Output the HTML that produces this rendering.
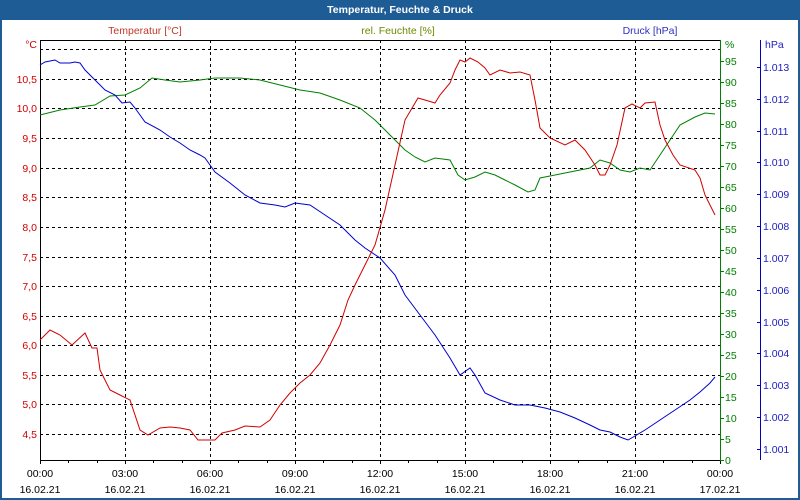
<!DOCTYPE html>
<html><head><meta charset="utf-8"><style>
html,body{margin:0;padding:0;width:800px;height:500px;overflow:hidden;background:#fff}
svg{display:block}
text{font-family:"Liberation Sans","DejaVu Sans",sans-serif;font-size:10.5px}
</style></head><body>
<svg width="800" height="500" viewBox="0 0 800 500">
<rect x="0" y="0" width="800" height="500" fill="#1e5c96"/>
<rect x="2" y="20" width="796" height="478" fill="#fff"/>
<text x="400" y="13" text-anchor="middle" fill="#fff" font-weight="bold" style="font-size:10.5px">Temperatur, Feuchte &amp; Druck</text>
<text x="145" y="34" text-anchor="middle" fill="#c0392b">Temperatur [°C]</text>
<text x="398" y="34" text-anchor="middle" fill="#6a8a00">rel. Feuchte [%]</text>
<text x="650" y="34" text-anchor="middle" fill="#3030c0">Druck [hPa]</text>
<g stroke="#000" stroke-dasharray="3,3" stroke-width="1">
<path d="M40 49.5H720M40 79.5H720M40 108.5H720M40 138.5H720M40 168.5H720M40 197.5H720M40 227.5H720M40 257.5H720M40 286.5H720M40 316.5H720M40 345.5H720M40 375.5H720M40 404.5H720M40 434.5H720"/>
<path d="M125.5 40V460M210.5 40V460M295.5 40V460M380.5 40V460M465.5 40V460M550.5 40V460M635.5 40V460"/>
</g>
<path d="M40.5 40V460.5H720" stroke="#000" fill="none"/>
<path d="M40 40.5H720" stroke="#000"/>
<path d="M40.5 460v4M68.5 460v3M97.5 460v3M125.5 460v4M153.5 460v3M182.5 460v3M210.5 460v4M238.5 460v3M267.5 460v3M295.5 460v4M323.5 460v3M352.5 460v3M380.5 460v4M408.5 460v3M437.5 460v3M465.5 460v4M493.5 460v3M522.5 460v3M550.5 460v4M578.5 460v3M607.5 460v3M635.5 460v4M663.5 460v3M692.5 460v3M720.5 460v4" stroke="#000"/>
<path d="M720.5 40V460" stroke="#008000"/>
<path d="M720 61.5h4M720 82.5h4M720 103.5h4M720 124.5h4M720 145.5h4M720 166.5h4M720 187.5h4M720 208.5h4M720 229.5h4M720 250.5h4M720 271.5h4M720 292.5h4M720 313.5h4M720 334.5h4M720 355.5h4M720 376.5h4M720 397.5h4M720 418.5h4M720 439.5h4M720 460.5h4" stroke="#008000"/>
<path d="M760.5 40V460" stroke="#0000c0"/>
<path d="M757 67.5h3M757 99.5h3M757 131.5h3M757 162.5h3M757 194.5h3M757 226.5h3M757 258.5h3M757 290.5h3M757 322.5h3M757 353.5h3M757 385.5h3M757 417.5h3M757 449.5h3" stroke="#0000c0"/>
<g fill="#d00000" text-anchor="end">
<text x="37" y="48">°C</text>
<text x="37" y="83">10,5</text><text x="37" y="112">10,0</text><text x="37" y="142">9,5</text><text x="37" y="172">9,0</text><text x="37" y="201">8,5</text><text x="37" y="231">8,0</text><text x="37" y="261">7,5</text><text x="37" y="290">7,0</text><text x="37" y="320">6,5</text><text x="37" y="349">6,0</text><text x="37" y="379">5,5</text><text x="37" y="408">5,0</text><text x="37" y="438">4,5</text>
</g>
<g fill="#008000">
<text x="725" y="48">%</text>
<text x="725" y="65">95</text><text x="725" y="86">90</text><text x="725" y="107">85</text><text x="725" y="128">80</text><text x="725" y="149">75</text><text x="725" y="170">70</text><text x="725" y="191">65</text><text x="725" y="212">60</text><text x="725" y="233">55</text><text x="725" y="254">50</text><text x="725" y="275">45</text><text x="725" y="296">40</text><text x="725" y="317">35</text><text x="725" y="338">30</text><text x="725" y="359">25</text><text x="725" y="380">20</text><text x="725" y="401">15</text><text x="725" y="422">10</text><text x="725" y="443">5</text><text x="725" y="464">0</text>
</g>
<g fill="#2020c0">
<text x="765" y="48">hPa</text>
<text x="763" y="71">1.013</text><text x="763" y="103">1.012</text><text x="763" y="135">1.011</text><text x="763" y="166">1.010</text><text x="763" y="198">1.009</text><text x="763" y="230">1.008</text><text x="763" y="262">1.007</text><text x="763" y="294">1.006</text><text x="763" y="326">1.005</text><text x="763" y="357">1.004</text><text x="763" y="389">1.003</text><text x="763" y="421">1.002</text><text x="763" y="453">1.001</text>
</g>
<g fill="#000" text-anchor="middle">
<text x="40" y="477">00:00</text><text x="125" y="477">03:00</text><text x="210" y="477">06:00</text><text x="295" y="477">09:00</text><text x="380" y="477">12:00</text><text x="465" y="477">15:00</text><text x="550" y="477">18:00</text><text x="635" y="477">21:00</text><text x="720" y="477">00:00</text>
<text x="40" y="493">16.02.21</text><text x="125" y="493">16.02.21</text><text x="210" y="493">16.02.21</text><text x="295" y="493">16.02.21</text><text x="380" y="493">16.02.21</text><text x="465" y="493">16.02.21</text><text x="550" y="493">16.02.21</text><text x="635" y="493">16.02.21</text><text x="720" y="493">17.02.21</text>
</g>
<polyline fill="none" stroke="#008000" points="40,115 60,110 80,107 95,105 110,96 125,95 140,88 152,78 165,80 180,82 200,80 215,78 240,78 260,80 280,85 300,90 320,93 340,100 360,108 375,120 385,130 395,140 405,150 415,157 425,162 435,158 450,160 458,175 465,180 475,177 485,172 495,175 505,180 515,185 528,192 535,190 540,178 555,175 570,172 590,168 600,160 610,163 620,170 630,172 640,168 650,170 660,155 670,140 680,125 695,117 705,113 715,114"/>
<polyline fill="none" stroke="#0000d0" points="40,65 45,62 55,60 60,63 70,63 75,62 80,63 85,70 95,80 105,90 115,95 122,103 130,102 135,108 145,122 160,130 170,137 180,143 190,150 200,155 205,158 215,172 230,183 245,195 260,203 275,205 285,207 295,203 310,205 325,215 340,225 355,240 365,248 380,258 395,275 405,295 420,315 435,335 450,358 460,375 470,368 475,375 485,393 500,400 515,405 530,405 545,408 560,412 575,418 590,425 600,430 610,432 620,437 628,440 635,436 645,430 660,420 675,410 690,400 700,392 710,383 715,377"/>
<polyline fill="none" stroke="#d00000" points="40,340 50,330 60,335 72,345 85,333 92,348 97,348 100,370 105,380 110,390 120,395 130,400 140,430 148,435 160,428 170,427 180,428 190,430 198,440 205,440 215,440 222,433 235,430 245,426 260,427 270,420 280,405 290,393 300,383 310,375 320,363 330,345 340,325 348,300 355,285 365,265 375,245 385,210 395,165 405,120 418,98 425,100 435,103 440,95 450,83 455,70 460,60 465,62 470,58 478,62 485,68 490,75 500,70 510,73 520,72 530,75 535,100 540,128 550,138 565,145 575,140 585,150 595,165 600,175 605,175 610,165 617,145 625,108 632,104 640,108 645,103 655,102 660,125 665,140 673,155 680,165 695,170 700,178 705,195 710,205 715,215"/>
</svg>
</body></html>
